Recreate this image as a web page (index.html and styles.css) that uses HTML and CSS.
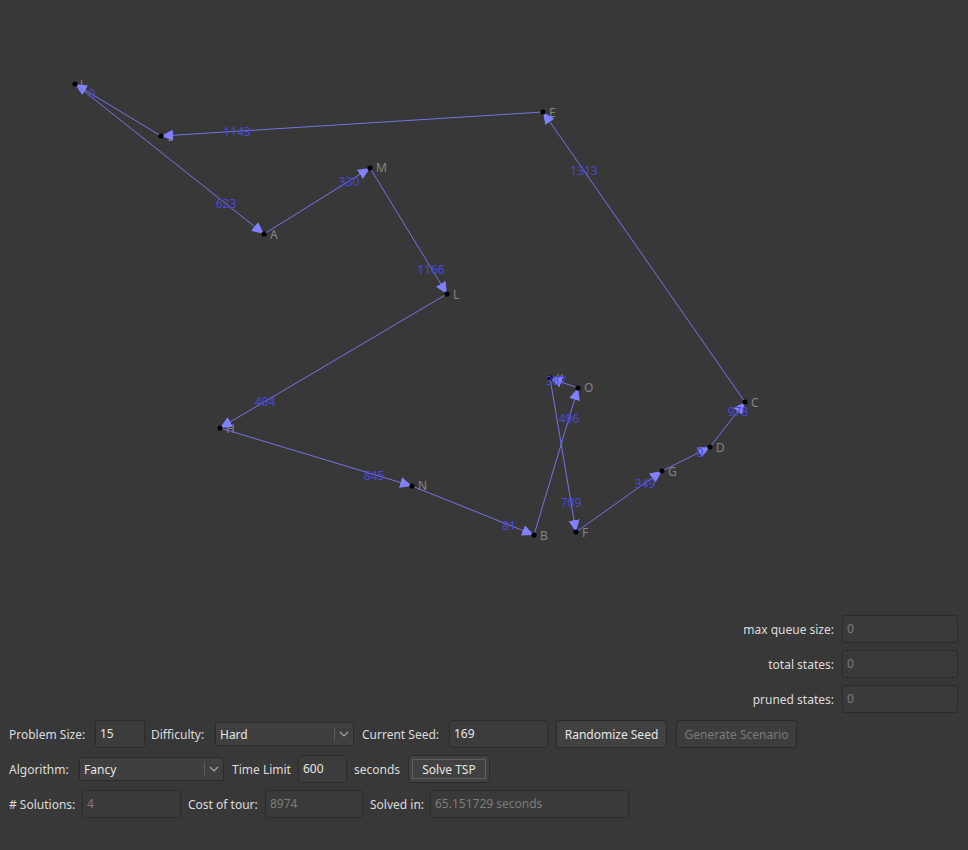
FILE: index.html
```html
<!DOCTYPE html>
<html>
<head>
<meta charset="utf-8">
<link rel="stylesheet" href="styles.css">
</head>
<body>
<div class="canvas">
<svg width="968" height="610" viewBox="0 0 968 610" class="graph">
  <defs>
    <marker id="ah" markerUnits="userSpaceOnUse" markerWidth="12" markerHeight="12" refX="12" refY="6" orient="auto">
      <path d="M0,0.5 L12,6 L0,11.5 z" fill="#8181ff"/>
    </marker>
  </defs>
  <g class="nlabels">
    <text x="80" y="89">J</text>
    <text x="168" y="141">I</text>
    <text x="270" y="239">A</text>
    <text x="376" y="172">M</text>
    <text x="453" y="299">L</text>
    <text x="549" y="117">E</text>
    <text x="226" y="433">H</text>
    <text x="418" y="490">N</text>
    <text x="556" y="383">K</text>
    <text x="584" y="392">O</text>
    <text x="540" y="540">B</text>
    <text x="582" y="537">F</text>
    <text x="751" y="407">C</text>
    <text x="716" y="452">D</text>
    <text x="668" y="476">G</text>
  </g>
  <g class="edges">
    <line x1="543" y1="112" x2="161" y2="136"/>
    <line x1="161" y1="136" x2="75" y2="84"/>
    <line x1="75" y1="84" x2="264" y2="234"/>
    <line x1="264" y1="234" x2="370" y2="168"/>
    <line x1="370" y1="168" x2="447" y2="294"/>
    <line x1="447" y1="294" x2="220" y2="428"/>
    <line x1="220" y1="428" x2="412" y2="486"/>
    <line x1="412" y1="486" x2="534" y2="535"/>
    <line x1="534" y1="535" x2="578" y2="388"/>
    <line x1="578" y1="388" x2="550" y2="378"/>
    <line x1="550" y1="378" x2="576" y2="532"/>
    <line x1="576" y1="532" x2="662" y2="471"/>
    <line x1="662" y1="471" x2="710" y2="447"/>
    <line x1="710" y1="447" x2="745" y2="402"/>
    <line x1="745" y1="402" x2="543" y2="112"/>
  </g>
  <g class="dots">
    <circle cx="75" cy="84" r="2.6"/>
    <circle cx="161" cy="136" r="2.6"/>
    <circle cx="264" cy="234" r="2.6"/>
    <circle cx="370" cy="168" r="2.6"/>
    <circle cx="447" cy="294" r="2.6"/>
    <circle cx="543" cy="112" r="2.6"/>
    <circle cx="220" cy="428" r="2.6"/>
    <circle cx="412" cy="486" r="2.6"/>
    <circle cx="550" cy="378" r="2.6"/>
    <circle cx="578" cy="388" r="2.6"/>
    <circle cx="534" cy="535" r="2.6"/>
    <circle cx="576" cy="532" r="2.6"/>
    <circle cx="745" cy="402" r="2.6"/>
    <circle cx="710" cy="447" r="2.6"/>
    <circle cx="662" cy="471" r="2.6"/>
  </g>
  <g class="elabels">
    <text x="237" y="136">1143</text>
    <text x="92" y="98">0</text>
    <text x="226" y="208">623</text>
    <text x="349" y="186">330</text>
    <text x="431" y="274">1166</text>
    <text x="265" y="406">404</text>
    <text x="374" y="480">845</text>
    <text x="509" y="530">81</text>
    <text x="569" y="423">496</text>
    <text x="556" y="385">387</text>
    <text x="571" y="507">709</text>
    <text x="645" y="488">349</text>
    <text x="700" y="457">0</text>
    <text x="738" y="416">978</text>
    <text x="584" y="175">1313</text>
  </g>
</svg>
</div>

<div class="stats">
  <div class="stat"><span class="lbl">max queue size:</span><div class="field dis w116">0</div></div>
  <div class="stat"><span class="lbl">total states:</span><div class="field dis w116">0</div></div>
  <div class="stat"><span class="lbl">pruned states:</span><div class="field dis w116">0</div></div>
</div>

<div class="controls">
  <div class="row">
    <span class="lbl l-size">Problem Size:</span>
    <div class="field w50">15</div>
    <span class="lbl l-diff">Difficulty:</span>
    <div class="select w139"><span class="sel-text">Hard</span><span class="sel-btn"><svg width="10" height="6" viewBox="0 0 10 6"><path d="M1,1 L5,5 L9,1" fill="none" stroke="#a8a8a8" stroke-width="1.1"/></svg></span></div>
    <span class="lbl l-seed">Current Seed:</span>
    <div class="field w99">169</div>
    <div class="btn b-rand">Randomize Seed</div>
    <div class="btn btn-dis b-gen">Generate Scenario</div>
  </div>
  <div class="row">
    <span class="lbl l-alg">Algorithm:</span>
    <div class="select w145"><span class="sel-text">Fancy</span><span class="sel-btn"><svg width="10" height="6" viewBox="0 0 10 6"><path d="M1,1 L5,5 L9,1" fill="none" stroke="#a8a8a8" stroke-width="1.1"/></svg></span></div>
    <span class="lbl l-time">Time Limit</span>
    <div class="field w49">600</div>
    <span class="lbl l-sec">seconds</span>
    <div class="btn btn-def b-solve"><span class="focus">Solve TSP</span></div>
  </div>
  <div class="row">
    <span class="lbl l-sol"># Solutions:</span>
    <div class="field dis w99">4</div>
    <span class="lbl l-cost">Cost of tour:</span>
    <div class="field dis w98">8974</div>
    <span class="lbl l-solved">Solved in:</span>
    <div class="field dis w199">65.151729 seconds</div>
  </div>
</div>
</body>
</html>
```
FILE: styles.css
```css
html, body {
  margin: 0;
  padding: 0;
  background: #383838;
  width: 968px;
  height: 850px;
  overflow: hidden;
  font-family: "Noto Sans", "DejaVu Sans", sans-serif;
  font-size: 12px;
  color: #dcdcdc;
}

.canvas {
  width: 968px;
  height: 610px;
}

.graph {
  display: block;
}

.graph text {
  font-family: "Noto Sans", "DejaVu Sans", sans-serif;
  font-size: 12px;
}

.nlabels text {
  fill: #858585;
}

.edges line {
  stroke: #7474ea;
  stroke-width: 1;
  marker-end: url(#ah);
}

.dots circle {
  fill: #000;
}

.elabels text {
  fill: #4848dc;
  text-anchor: middle;
}

.stats {
  display: flex;
  flex-direction: column;
  align-items: flex-end;
  gap: 7px;
  margin-top: 5px;
  padding-right: 10px;
}

.stat {
  display: flex;
  align-items: center;
  height: 28px;
}

.stat .lbl {
  margin-right: 8px;
}

.controls {
  display: flex;
  flex-direction: column;
  gap: 7px;
  margin-top: 7px;
  padding-left: 9px;
}

.row {
  display: flex;
  align-items: center;
  height: 28px;
}

.lbl {
  white-space: nowrap;
  color: #dcdcdc;
}

.field {
  box-sizing: border-box;
  height: 28px;
  border: 1px solid #2b2b2b;
  border-radius: 3px;
  background: #3c3c3c;
  padding-left: 4px;
  line-height: 26px;
  color: #e6e6e6;
  white-space: nowrap;
}

.field.dis {
  color: #7c7c7c;
  background: #3a3a3a;
}

.w116 { width: 116px; }
.w50 { width: 50px; }
.w49 { width: 49px; }
.w99 { width: 99px; }
.w98 { width: 98px; }
.w199 { width: 199px; }

.select {
  box-sizing: border-box;
  height: 24px;
  margin: 0 2px;
  border: 1px solid #2b2b2b;
  border-radius: 2px;
  background: #3f3f3f;
  display: flex;
  align-items: center;
  color: #e6e6e6;
}

.w139 { width: 139px; }
.w145 { width: 145px; }

.sel-text {
  flex: 1;
  padding-left: 4px;
}

.sel-btn {
  width: 18px;
  height: 14px;
  border-left: 1px solid #5a5a5a;
  display: flex;
  align-items: center;
  justify-content: center;
}

.btn {
  box-sizing: border-box;
  height: 28px;
  border: 1px solid #2a2a2a;
  border-radius: 3px;
  background: #414141;
  color: #e6e6e6;
  display: flex;
  align-items: center;
  justify-content: center;
  white-space: nowrap;
}

.btn-dis {
  color: #7a7a7a;
  background: #3d3d3d;
}

.btn-def {
  padding: 3px;
}

.btn-def .focus {
  box-sizing: border-box;
  width: 100%;
  height: 100%;
  border: 1px solid #5e5e5e;
  display: flex;
  align-items: center;
  justify-content: center;
}

.l-size { width: 86px; }
.l-diff { width: 62px; margin-left: 6px; }
.l-seed { width: 87px; margin-left: 6px; }
.b-rand { width: 111px; margin-left: 8px; }
.b-gen { width: 121px; margin-left: 9px; }

.l-alg { width: 68px; }
.l-time { width: 66px; margin-left: 6px; }
.l-sec { width: 54px; margin-left: 7px; }
.b-solve { width: 82px; }

.l-sol { width: 73px; }
.l-cost { width: 77px; margin-left: 7px; }
.l-solved { width: 60px; margin-left: 7px; }
```
